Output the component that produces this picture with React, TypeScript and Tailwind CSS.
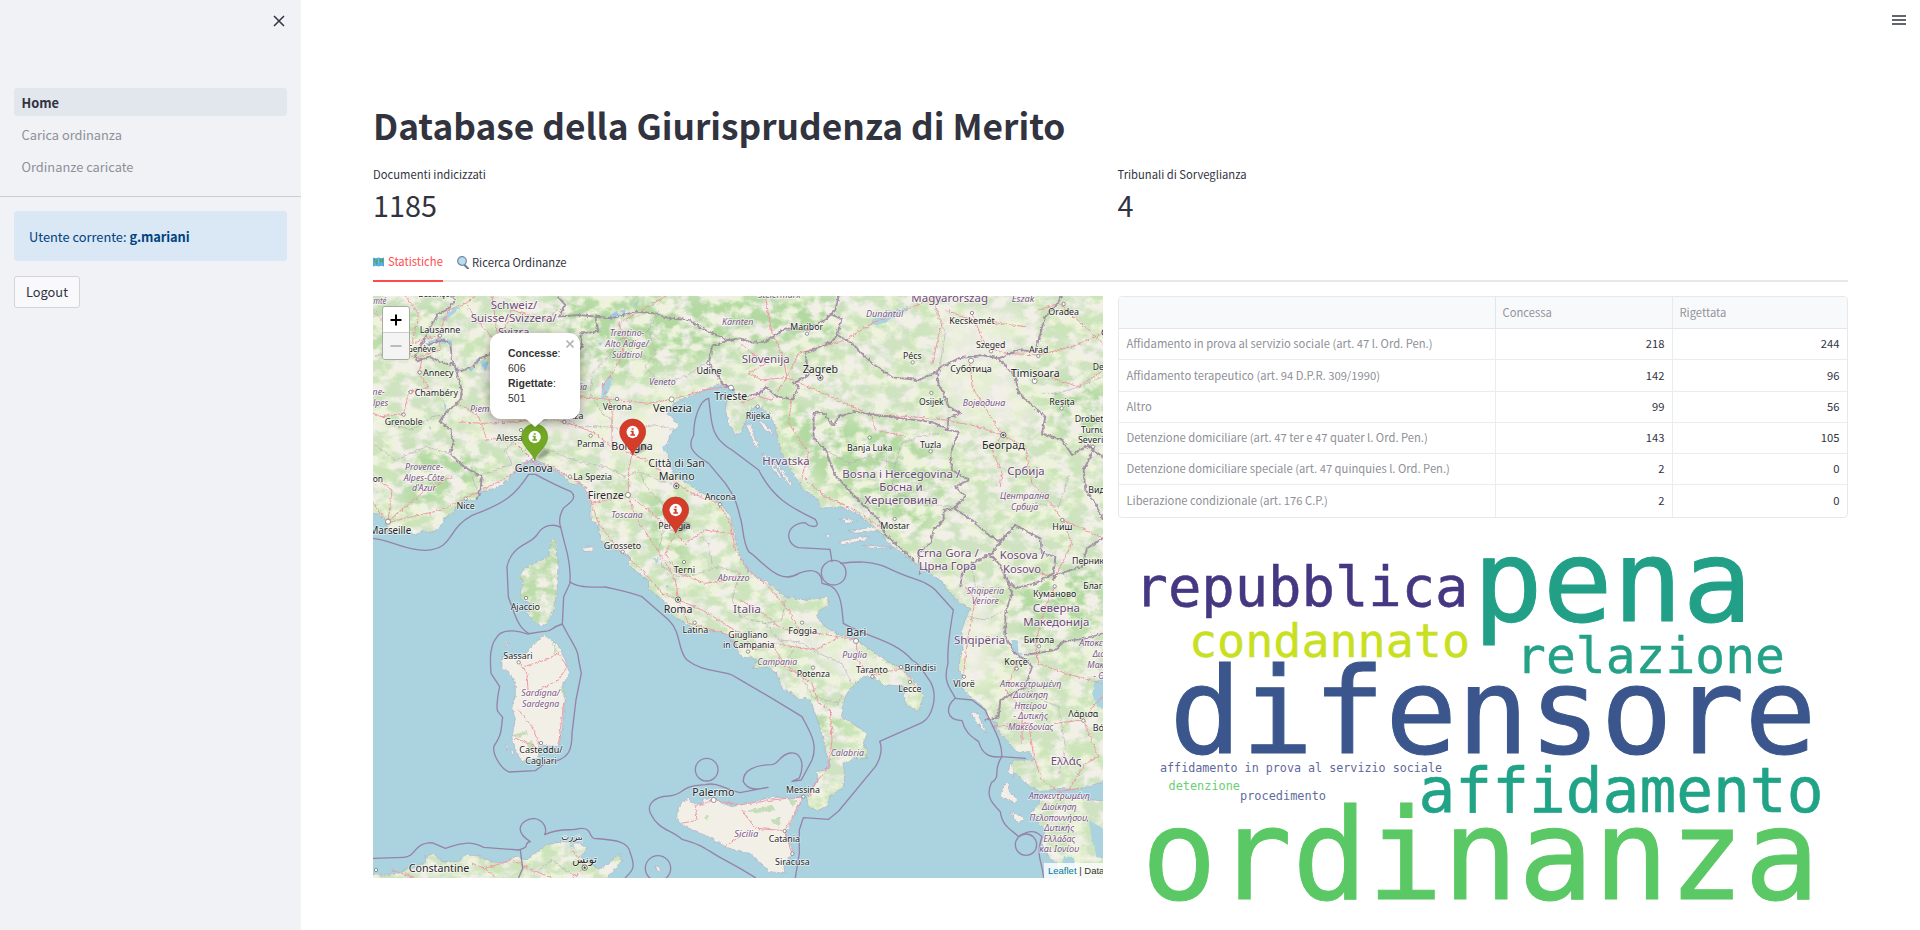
import React from "react";

const FONT = "font-['Noto_Sans_CJK_JP','Noto_Sans_CJK_SC',sans-serif]";

const SEA =
  "-20,668 20,672 35,685 45,705 40,718 70,725 100,722 130,735 150,722 180,728 200,715 215,700 215,685 240,672 255,650 280,630 310,632 318,610 350,602 380,590 410,570 425,545 450,520 480,508 510,518 540,535 575,555 595,585 625,580 640,600 655,640 658,690 680,705 685,750 700,760 730,780 755,785 775,805 770,825 800,850 830,875 830,900 860,920 885,940 905,980 940,1000 970,1018 990,1035 1020,1020 1060,1032 1085,1048 1100,1085 1114,1105 1139,1100 1154,1110 1144,1135 1189,1132 1214,1150 1224,1180 1234,1200 1259,1210 1284,1230 1304,1220 1319,1240 1329,1270 1344,1310 1354,1350 1362,1390 1376,1430 1360,1440 1334,1445 1339,1470 1319,1500 1304,1520 1309,1550 1339,1560 1364,1550 1374,1520 1414,1490 1419,1450 1412,1420 1449,1405 1484,1405 1484,1380 1474,1360 1486,1330 1464,1315 1434,1295 1409,1280 1414,1240 1424,1210 1449,1180 1474,1160 1504,1160 1534,1185 1594,1188 1594,1220 1604,1245 1639,1265 1654,1220 1639,1190 1619,1165 1584,1132 1544,1115 1504,1085 1454,1050 1404,1035 1359,1010 1334,980 1344,960 1372,945 1366,922 1334,925 1294,930 1234,918 1204,890 1184,875 1164,870 1124,840 1104,800 1095,770 1085,720 1075,680 1045,640 1010,620 960,590 935,575 905,550 890,510 885,470 895,430 920,410 900,380 885,370 905,340 950,320 1000,300 1040,282 1078,290 1090,310 1065,330 1060,360 1070,400 1090,435 1104,430 1119,400 1129,370 1144,350 1164,350 1194,375 1209,405 1214,440 1224,480 1249,530 1269,560 1294,600 1339,630 1344,655 1404,650 1454,670 1504,710 1534,735 1544,755 1584,785 1624,815 1674,850 1704,870 1744,920 1764,940 1794,955 1784,980 1769,1020 1774,1070 1764,1110 1759,1140 1774,1160 1759,1180 1784,1210 1834,1250 1844,1280 1874,1300 1874,1320 1904,1350 1934,1385 1974,1385 1984,1410 1924,1410 1914,1440 1944,1460 1974,1490 2004,1505 2064,1495 2114,1500 2210,1470 2210,1535 2120,1525 2060,1512 2010,1520 1994,1550 1974,1570 1994,1590 2019,1620 2009,1660 2029,1700 2054,1720 2060,1790 690,1790 705,1763 730,1735 750,1715 740,1692 710,1720 680,1738 660,1725 625,1700 645,1675 620,1660 570,1655 520,1665 490,1690 460,1710 430,1700 390,1720 360,1715 320,1698 280,1695 260,1715 210,1715 185,1690 160,1700 160,1720 110,1735 80,1750 40,1758 -20,1750";

const ISLANDS = [
  "540,745 550,750 553,790 560,820 555,870 555,900 545,960 525,1000 510,1010 490,995 465,970 485,945 445,925 445,910 455,870 440,865 455,835 500,815 530,800 535,770",
  "515,1035 545,1055 560,1070 580,1110 592,1150 570,1190 580,1220 575,1270 570,1320 560,1370 500,1365 500,1400 450,1415 430,1380 420,1340 430,1290 420,1250 430,1220 430,1180 410,1145 390,1135 390,1100 450,1100 470,1080 490,1060",
  "915,1570 930,1535 950,1525 965,1545 990,1540 995,1525 1025,1525 1050,1540 1080,1550 1104,1545 1164,1530 1214,1520 1254,1528 1294,1520 1274,1560 1254,1600 1239,1640 1259,1670 1264,1690 1234,1720 1239,1750 1194,1745 1164,1720 1134,1690 1104,1685 1060,1670 1010,1640 940,1610 915,1585",
  "630,778 645,772 666,768 664,784 634,784",
  "1794,1270 1819,1268 1829,1300 1844,1330 1824,1312 1808,1286",
  "1884,1520 1894,1488 1908,1478 1912,1508 1936,1526 1930,1538 1904,1528",
  "1914,1565 1950,1580 1958,1590 1934,1596",
  "1915,1420 1926,1440 1922,1460 1908,1446",
  "404,1052 410,1060 402,1072", "400,1365 408,1370 404,1382", "416,1378 426,1385 420,1396",
  "1122,405 1136,400 1150,450 1162,468 1154,476 1138,440", "1160,390 1196,418 1206,436 1178,420",
  "1404,685 1440,688 1456,694 1420,700", "1360,735 1376,732 1370,742", "1400,755 1460,742 1490,740 1480,750 1410,764", "1430,722 1500,712 1520,722 1450,730",
  "1170,490 1180,494 1230,560 1222,562", "1200,510 1206,508 1262,584 1256,590", "1470,765 1560,772 1510,776",
  "850,1728 862,1730 866,1742 856,1742",
];

const MARITIME = [
  "M3 745 C60 750 90 780 160 781 C250 775 220 720 300 676 C400 640 430 615 470 553 L490 553 C540 580 560 590 596 604 C620 625 590 640 574 655 C560 680 562 700 566 712",
  "M566 712 C545 700 515 705 498 730 C480 765 420 760 405 830 L409 920 C430 980 440 1015 470 1030",
  "M566 712 L578 760 C590 800 596 850 594 880 L575 920 L571 1002",
  "M571 1002 C530 1015 545 1025 510 1025 L466 1032 C440 1022 405 1018 385 1030 C350 1060 354 1110 357 1150 L383 1190 C376 1220 372 1260 378 1265 L392 1282 C386 1320 392 1330 366 1368 C360 1395 390 1440 412 1446 L490 1442 C520 1420 520 1412 555 1412 C590 1400 600 1380 600 1330 L612 1230 L628 1150 L620 1110 C620 1080 600 1060 571 1002",
  "M594 875 C610 890 650 893 700 891 C740 900 770 905 810 920 L890 990 C930 1030 915 1080 945 1110 C990 1145 1040 1140 1080 1155 L1114 1175 L1200 1225 L1290 1280 C1310 1320 1340 1360 1320 1410 L1288 1470 L1260 1474 L1282 1464 C1300 1420 1285 1385 1255 1389 C1220 1395 1225 1420 1200 1424 C1150 1424 1112 1440 1114 1475 C1130 1505 1160 1497 1188 1492 L1104 1508 C1060 1500 1040 1475 1000 1484 C910 1490 950 1510 890 1518 C840 1520 822 1548 838 1575 C860 1620 900 1620 930 1648 C990 1665 990 1670 1040 1700 L1104 1735 L1150 1763",
  "M1270 1763 L1282 1690 L1282 1620 L1294 1583 L1370 1588 L1400 1563 L1510 1430 C1530 1400 1530 1370 1523 1354 L1650 1298 C1680 1280 1700 1220 1675 1175 C1650 1140 1640 1120 1620 1110 C1570 1050 1480 1040 1414 1000 C1410 960 1410 900 1370 885 L1350 880 C1350 850 1330 830 1280 850 C1220 890 1170 810 1130 785 C1110 750 1115 710 1104 680 C1090 620 1080 610 1060 580 L1010 520 C960 490 945 470 965 435 C965 380 985 330 1010 325",
  "M1010 325 C1020 390 1010 440 1080 480 L1160 540 C1200 620 1250 650 1330 688 C1350 720 1310 710 1300 698 C1240 700 1235 760 1280 773 L1374 778 L1380 815",
  "M1406 820 C1450 815 1500 810 1550 835 C1620 870 1660 870 1690 900 L1744 960 C1730 1040 1725 1080 1728 1120 C1710 1180 1740 1200 1750 1225 C1720 1250 1720 1290 1770 1292 C1780 1330 1800 1340 1820 1355 C1830 1390 1850 1405 1890 1400 C1860 1440 1890 1460 1858 1478 C1840 1520 1860 1540 1885 1565 C1890 1610 1920 1620 1940 1640 C1970 1620 1990 1620 2010 1640 C1990 1700 2010 1710 2015 1763",
  "M1750 1225 L1800 1230 L1840 1260 C1860 1310 1890 1350 1890 1400 L1960 1405",
  "M3 1705 L95 1702 C135 1700 120 1660 180 1658 L220 1675 C280 1655 300 1655 335 1672 L440 1680 C480 1670 450 1660 475 1655 C420 1620 450 1590 485 1585 C520 1590 525 1620 518 1634 C570 1610 600 1625 620 1616 C660 1610 650 1640 665 1645 C720 1650 770 1650 775 1690 C790 1730 785 1740 760 1763",
  "M445 1680 L452 1735 L440 1763",
];

const CIRCLES = [[1004, 1439, 34], [858, 1735, 38], [1962, 1664, 32], [1385, 848, 37]];

const BORDERS = [
  "240,18 250,30 225,60 200,70 175,110 165,130 130,200 135,215 170,200 230,225 245,215 255,250 270,300 265,330 215,375 205,395 235,420 245,455 235,490 275,530 330,560 325,600 315,625",
  "170,165 205,150 235,158 240,215 260,245 300,232 325,205 360,190 400,225 430,190 470,230 500,215 540,215 590,190 630,170 625,130 680,125 670,80 720,85",
  "555,18 580,45 560,80 620,75 670,80 720,85 790,65 850,70 890,85 950,90 1000,120 1070,150",
  "1070,150 1104,145 1140,158 1180,155 1240,115 1310,120 1365,85 1390,60 1400,18",
  "1070,150 1020,170 1010,220 1035,250 1050,280 1085,300",
  "1104,322 1165,310 1180,290 1215,320 1262,328 1280,290 1265,280 1310,255 1300,190 1380,155 1395,135 1410,85 1380,75",
  "1395,135 1440,160 1500,220 1560,262 1640,270 1690,248 1710,230 1760,205 1830,195 1880,205 1940,180 1990,185 2005,130 2020,80 2050,50 2070,18",
  "1695,248 1700,285 1715,310 1730,350 1765,370 1730,385 1725,420 1690,400 1670,395 1590,385 1510,375 1450,365 1400,380 1385,405 1350,365 1325,370 1325,445 1360,480 1390,555 1440,610 1480,650 1520,690 1540,735 1625,810",
  "1725,420 1760,425 1735,490 1740,540 1790,570 1750,590 1780,620 1745,655 1715,660 1715,690 1685,720 1675,760 1640,790 1645,850",
  "1745,655 1800,690 1850,735 1885,755 1860,790 1800,820 1770,850 1765,890",
  "1885,755 1930,705 1975,730 2005,745 2010,790 2050,800 2045,850 1990,880 1930,895 1905,870 1880,820 1850,790",
  "1880,205 1930,260 1940,310 2020,380 2010,430 2070,450 2100,495 2150,465 2165,480 2135,540 2140,600 2170,640 2193,690",
  "2193,745 2145,775 2130,830 2050,855 2045,870",
  "1905,870 1920,910 1900,970 1900,1040 1930,1090 1960,1110 1980,1130 1960,1190 1885,1230 1880,1280 1840,1290",
  "1960,1095 2050,1080 2075,1055 2140,1045 2193,1030",
  "2150,470 2193,500",
];

const PROVINCES = [
  "315,600 300,560 360,545 420,520 400,480 430,450 510,470 590,505 640,520 700,530 760,560 800,545 860,570 900,580",
  "460,480 500,400 560,370 620,410 700,410 780,420 850,405 910,420", "660,260 655,310 690,370 720,390 720,420",
  "660,250 710,200 740,150 830,120 860,60", "830,120 850,190 820,230 860,280 940,260 1000,220",
  "800,545 830,600 870,640 880,700 860,780 870,830 920,860 980,850 1040,830 1104,850", "880,700 940,690 960,720 1010,760 1020,820",
  "1104,850 1080,920 1104,980 1180,1000 1230,990 1240,930", "1180,1000 1220,1050 1280,1055 1340,1090 1410,1120 1440,1180",
  "1280,1055 1240,1120 1290,1160 1320,1220 1400,1240 1414,1210", "10,200 60,180 70,120 130,130", "50,400 120,420 180,380 215,375",
  "3,460 70,510 160,470 230,490", "1360,480 1430,520 1490,500 1570,520 1590,460 1640,440 1700,430", "1570,520 1560,600 1640,640 1740,650",
  "1700,250 1720,130 1690,60 1700,18", "2010,310 2060,310 2120,290 2193,260", "1900,960 1840,990 1790,980", "1800,820 1810,890 1900,940",
  "1960,1190 2010,1230 2060,1250 2080,1370 2060,1450", "500,1740 540,1710 580,1740 620,1763", "1990,640 2060,650 2090,560",
];

const ROADS = [
  "3,60 60,120 120,200 150,210 140,250 170,290 110,305 95,370 30,380 3,370", "100,18 140,70 120,160 200,135 205,180 140,200",
  "200,135 230,60 280,40 310,18", "280,40 330,110 380,160 360,18", "380,160 420,60 520,90 555,60", "260,340 320,380 345,450 410,440 470,500",
  "260,395 330,400 440,395 520,380 575,395 660,425 720,470 780,492 830,515 900,570 960,610 1040,640 1075,700 1090,780 1130,840 1190,890 1250,960 1280,1020 1400,1040 1450,1050",
  "575,395 620,320 740,330 830,340 900,328 1000,300 1060,290", "720,470 720,350 690,290 740,220 760,150 740,100 830,50 880,18",
  "780,492 770,540 768,615 790,680 830,740 870,800 910,870 920,930 990,960 1104,1030 1150,1080 1200,1060 1240,1130 1320,1180 1340,1240 1375,1260 1380,1350 1370,1430 1330,1480 1310,1520",
  "470,515 540,530 590,560 640,590 660,640 768,615", "640,590 680,700 740,780 810,840 870,910 920,930 950,1000 1060,1030 1104,1080",
  "768,615 830,660 910,730 940,760 1000,720 1080,730", "910,730 880,790 920,850 1000,880 1070,870 1104,850", "40,700 120,680 210,660 280,626 330,600 410,560 480,508",
  "3,560 60,600 48,695 3,640", "48,695 160,600 240,560", "1454,1050 1454,1110 1500,1155 1594,1135 1630,1190", "1404,1040 1330,1080 1200,1060", "1104,930 1160,960 1220,1010 1290,1035",
  "1104,160 1180,220 1130,250 1170,270 1245,262 1280,190 1350,170 1420,150 1500,100 1600,60 1700,18", "1180,18 1200,130 1230,190 1245,262", "1104,340 1160,320 1200,330 1245,262 1330,300 1420,340 1500,375 1620,380 1720,390 1820,410 1890,435",
  "1260,320 1250,400 1310,490 1290,560 1360,620 1450,660 1530,715", "1800,70 1840,170 1900,190 1999,195 2100,170 2193,130", "1680,18 1710,100 1680,220", "1795,210 1800,290 1850,370 1890,435 1960,470 1980,580 2020,620 2071,690 2140,720 2193,745",
  "2071,690 2100,760 2050,860 1970,840", "1990,250 2060,270 2120,290 2193,240", "1890,435 1860,480 1890,550 1885,590", "1500,380 1510,420 1560,430 1600,440",
  "2048,890 2020,950 1990,1060 2000,1120 2080,1150 2190,1180", "1774,1160 1780,1100 1790,1030 1810,930 1780,890", "2050,1300 2130,1290 2190,1220", "2134,1290 2180,1400 2140,1420 2090,1500", "1860,1310 1970,1300 1985,1400 2010,1470 2060,1505 2120,1495",
  "440,1115 465,1150 468,1200", "455,1130 520,1110 560,1090 585,1130 560,1170 500,1200", "440,1260 480,1310 500,1360", "490,1370 430,1345", "575,1240 560,1360",
  "1025,1530 970,1550 975,1590 930,1600", "1025,1530 1100,1545 1200,1530 1294,1520 1250,1600 1238,1622 1260,1690", "1238,1622 1150,1615 1110,1560", "1060,1670 1130,1620",
  "300,1720 340,1735 420,1710 480,1740 540,1763", "600,1680 640,1733 600,1763", "60,1740 130,1763", "340,1735 370,1763",
  "2000,60 2060,40 2150,120 2193,160", "1720,60 1800,90 1880,100 1960,110", "1940,1110 1900,1200 1950,1260 1950,1360",
];

type Label = [string, number, number, number, number, string?];
/* [text, center x, baseline y, font size, width, kind] */
const LABELS: Label[] = [
  ["Lausanne", 204, 127, 28, 122], ["Genève", 148, 184, 28, 88], ["Annecy", 199, 258, 28, 92], ["Chambéry", 193, 317, 28, 130], ["Grenoble", 95, 405, 28, 114],
  ["Alessandria", 445, 451, 28, 144], ["Genova", 485, 544, 31, 114], ["La Spezia", 662, 569, 28, 117], ["Firenze", 701, 626, 31, 108], ["Parma", 656, 469, 28, 82],
  ["Bologna", 780, 479, 31, 124], ["Verona", 736, 359, 28, 88], ["Venezia", 901, 364, 31, 116], ["Udine", 1011, 250, 28, 75], ["Trieste", 1076, 328, 31, 98],
  ["Piacenza", 580, 386, 28, 108], ["Città di San", 914, 529, 31, 170], ["Marino", 914, 570, 31, 108], ["Ancona", 1045, 630, 28, 94], ["Perugia", 907, 715, 28, 96],
  ["Nice", 281, 656, 28, 55], ["Marseille", 55, 730, 31, 125], ["Avignon", -16, 575, 28, 98], ["Grosseto", 751, 775, 28, 112], ["Terni", 937, 847, 28, 64],
  ["Besançon", 194, 21, 28, 110],
  ["Ajaccio", 460, 959, 28, 88], ["Roma", 918, 967, 31, 86], ["Latina", 970, 1027, 28, 77], ["Giugliano", 1128, 1042, 28, 118], ["in Campania", 1130, 1074, 28, 154],
  ["Sassari", 438, 1107, 28, 88], ["Casteddu/", 507, 1389, 28, 130], ["Cagliari", 507, 1421, 28, 94], ["Palermo", 1024, 1517, 31, 126], ["Constantine", 201, 1744, 31, 182],
  ["بنزرت", 600, 1650, 28, 64], ["تونس", 638, 1718, 32, 74],
  ["Foggia", 1292, 1030, 28, 86], ["Bari", 1453, 1038, 31, 60], ["Taranto", 1500, 1148, 28, 96], ["Brindisi", 1645, 1141, 28, 95], ["Lecce", 1614, 1206, 28, 70],
  ["Potenza", 1324, 1161, 28, 100], ["Messina", 1293, 1507, 28, 102], ["Catania", 1237, 1656, 28, 94], ["Siracusa", 1261, 1724, 28, 104],
  ["Maribor", 1304, 120, 28, 98], ["Zagreb", 1345, 247, 31, 106], ["Rijeka", 1158, 386, 28, 74], ["Pécs", 1621, 206, 28, 56], ["Osijek", 1678, 345, 28, 74],
  ["Kecskemét", 1800, 100, 28, 136], ["Szeged", 1856, 174, 28, 88], ["Суботица", 1797, 244, 28, 124], ["Oradea", 2075, 73, 28, 92], ["Arad", 2000, 188, 28, 58],
  ["Timișoara", 1990, 259, 31, 146], ["Reșița", 2070, 345, 28, 76], ["Deva", 2192, 239, 28, 60], ["Cluj", 2212, 136, 28, 50], ["Drobeta-", 2163, 394, 28, 110], ["Turnu", 2163, 427, 28, 72], ["Severin", 2164, 458, 28, 92],
  ["Banja Luka", 1493, 481, 28, 136], ["Tuzla", 1676, 474, 28, 64], ["Београд", 1894, 477, 31, 128], ["Mostar", 1569, 717, 28, 88], ["Ниш", 2071, 720, 28, 60], ["Видин", 2190, 609, 28, 82], ["Перник", 2148, 820, 28, 96],
  ["Благоевград", 2214, 897, 28, 160], ["Куманово", 2048, 920, 28, 130], ["Битола", 2001, 1057, 28, 92], ["Korçë", 1932, 1125, 28, 70], ["Vlorë", 1776, 1190, 28, 64], ["Λάρισα", 2134, 1281, 28, 90], ["Βόλος", 2200, 1323, 28, 76],
  ["Schweiz/", 426, 55, 31, 140, "c"], ["Suisse/Svizzera/", 425, 96, 31, 258, "c"], ["Svizra", 425, 137, 31, 94, "c"], ["Slovenija", 1181, 218, 31, 144, "c"], ["Magyarország", 1733, 34, 31, 230, "c"],
  ["Hrvatska", 1242, 524, 31, 142, "c"], ["Bosna i Hercegovina /", 1588, 562, 31, 354, "c"], ["Босна и", 1587, 602, 31, 130, "c"], ["Херцеговина", 1587, 642, 31, 220, "c"], ["Србија", 1962, 555, 31, 112, "c"],
  ["Crna Gora /", 1727, 800, 31, 186, "c"], ["Црна Гора", 1727, 839, 31, 172, "c"], ["Kosova /", 1951, 807, 31, 136, "c"], ["Kosovo", 1950, 847, 31, 114, "c"], ["Северна", 2053, 965, 31, 142, "c"], ["Македонија", 2053, 1006, 31, 198, "c"],
  ["Shqipëria", 1823, 1061, 31, 154, "c"], ["Italia", 1125, 969, 31, 84, "c"], ["Ελλάς", 2082, 1424, 31, 92, "c"],
  ["Trentino-", 765, 138, 27, 104, "r"], ["Alto Adige/", 765, 170, 27, 130, "r"], ["Südtirol", 765, 202, 27, 92, "r"], ["Veneto", 871, 284, 27, 80, "r"], ["Kärnten", 1097, 105, 27, 94, "r"], ["Piemonte", 350, 366, 27, 112, "r"], ["Lombardia", 585, 298, 27, 120, "r"],
  ["Provence-", 156, 539, 27, 114, "r"], ["Alpes-Côte", 156, 571, 27, 122, "r"], ["d'Azur", 156, 603, 27, 72, "r"], ["Auvergne-", -20, 315, 27, 116, "r"], ["Rhône-Alpes", -22, 348, 27, 142, "r"], ["Comté", 10, 42, 27, 66, "r"], ["Toscana", 765, 683, 27, 94, "r"], ["Abruzzo", 1085, 872, 27, 96, "r"],
  ["Steiermark", 1222, 24, 27, 128, "r"], ["Dunántúl", 1538, 81, 27, 112, "r"], ["Észak", 1953, 34, 27, 68, "r"], ["Војводина", 1836, 346, 27, 128, "r"], ["Централна", 1958, 627, 27, 148, "r"], ["Србија", 1958, 659, 27, 82, "r"],
  ["Sardigna/", 506, 1217, 27, 116, "r"], ["Sardegna", 506, 1249, 27, 112, "r"], ["Sicilia", 1123, 1639, 27, 72, "r"], ["Campania", 1216, 1123, 27, 120, "r"], ["Puglia", 1448, 1103, 27, 74, "r"], ["Calabria", 1426, 1397, 27, 100, "r"],
  ["Shqipëria", 1840, 910, 27, 112, "r"], ["Veriore", 1840, 942, 27, 82, "r"], ["Αποκεντρωμένη", 1976, 1191, 27, 184, "r"], ["Διοίκηση", 1976, 1223, 27, 104, "r"], ["Ηπείρου", 1976, 1255, 27, 98, "r"], ["- Δυτικής", 1976, 1287, 27, 104, "r"], ["Μακεδονίας", 1976, 1318, 27, 136, "r"],
  ["Αποκεντρωμένη", 2062, 1527, 27, 184, "r"], ["Διοίκηση", 2062, 1559, 27, 104, "r"], ["Πελοποννήσου,", 2062, 1591, 27, 180, "r"], ["Δυτικής", 2062, 1623, 27, 90, "r"], ["Ελλάδας", 2062, 1655, 27, 96, "r"], ["και Ιονίου", 2062, 1686, 27, 120, "r"],
  ["Αποκεντρωμένη", 2214, 1068, 27, 184, "r"], ["Διοίκηση", 2214, 1101, 27, 104, "r"], ["Μακεδονίας", 2214, 1133, 27, 136, "r"], ["- Θράκης", 2214, 1165, 27, 100, "r"],
];

const DOTS = [
  [204, 137], [143, 247], [116, 306], [95, 374], [447, 420], [484, 509], [594, 560], [656, 437], [735, 327], [1009, 219], [577, 396], [1044, 643], [281, 626], [752, 785], [936, 816], [462, 924], [968, 998], [440, 1117], [507, 1359],
  [1290, 998], [1587, 1131], [1614, 1176], [1323, 1133], [1501, 1160], [1294, 1520], [1238, 1623], [1261, 1691], [1305, 131], [1157, 350], [1622, 217], [1678, 309], [1800, 69], [1857, 184], [2075, 42], [1999, 198], [2069, 355], [1493, 443], [1676, 484],
  [1568, 687], [2071, 690], [2048, 889], [2001, 1069], [1934, 1136], [1776, 1160], [2134, 1292], [2163, 470], [12, 1740], [1128, 1085],
];
const CITY_DOTS = [[899, 328], [1077, 293], [768, 615], [48, 695], [1797, 212], [1988, 273], [1452, 1053], [1025, 1530]];
const CAPITALS = [[918, 929], [1345, 263], [1894, 435], [638, 1733], [913, 588]];

const FILL: Record<string, string> = { t: "#262626", c: "#6f4a7a", r: "#7b5687" };

function MapLabel({ item }: { item: Label }) {
  const [text, x, y, size, width, kind = "t"] = item;
  return (
    <text x={x} y={y + 1} fontSize={size} textLength={width} lengthAdjust="spacingAndGlyphs" fill={FILL[kind]} fontStyle={kind === "r" ? "italic" : "normal"}
      textAnchor="middle" stroke="#ffffff" strokeOpacity=".65" strokeWidth="5" strokeLinejoin="round" paintOrder="stroke">{text}</text>
  );
}

function Pin({ x, y, color, edge }: { x: number; y: number; color: string; edge: string }) {
  return (
    <g transform={`translate(${x} ${y})`}>
      <path d="M2 -3 L26 -32 Q48 -34 44 -20 Q30 -8 2 0Z" fill="#000" opacity=".28" filter="url(#soft)" />
      <path d="M0 0 C-6 -22 -39 -40 -39 -70 A39 38 0 0 1 39 -70 C39 -40 6 -22 0 0Z" fill={color} stroke={edge} strokeWidth="2" />
      <circle cx="0" cy="-69" r="18.5" fill="#fff" />
      <path d="M-6 -73 H3 V-62 H7 V-58 H-7 V-62 H-3 V-69 H-6Z M-3 -80 H3 V-76 H-3Z" fill={color} />
    </g>
  );
}

function ItalyMap() {
  return (
    <svg className="block h-full w-full" viewBox="3 18 2190 1746" preserveAspectRatio="none" fontFamily="'Noto Sans','DejaVu Sans',sans-serif">
      <defs>
        <filter id="rough" x="-5%" y="-5%" width="110%" height="110%">
          <feTurbulence type="fractalNoise" baseFrequency=".1" numOctaves="2" seed="4" />
          <feDisplacementMap in="SourceGraphic" scale="12" xChannelSelector="R" yChannelSelector="G" />
        </filter>
        <filter id="forest" x="0" y="0" width="100%" height="100%" colorInterpolationFilters="sRGB">
          <feTurbulence type="fractalNoise" baseFrequency=".022 .028" numOctaves="6" seed="11" />
          <feColorMatrix values="0 0 0 0 .67  0 0 0 0 .84  0 0 0 0 .60  4 0 0 0 -1.5" />
        </filter>
        <filter id="fields" x="0" y="0" width="100%" height="100%" colorInterpolationFilters="sRGB">
          <feTurbulence type="fractalNoise" baseFrequency=".014" numOctaves="5" seed="27" />
          <feColorMatrix values="0 0 0 0 .925  0 0 0 0 .96  0 0 0 0 .83  0 4 0 0 -1.6" />
        </filter>
        <filter id="soft"><feGaussianBlur stdDeviation="3" /></filter>
        <filter id="blur"><feGaussianBlur stdDeviation="22" /></filter>
        <mask id="woods">
          <rect width="2200" height="1780" fill="#808080" />
          <g filter="url(#blur)">
            <path d="M300 380 L420 370 L560 400 L860 350 L1040 270 L890 500 L700 470 L560 420 L440 440 L300 430Z" fill="#000" />
            <path d="M1700 60 L1960 60 L1900 200 L2000 400 L1800 420 L1700 300Z" fill="#222" />
            <path d="M1220 980 L1460 1060 L1640 1240 L1400 1160Z M1760 930 L1850 900 L1860 1200 L1760 1180Z M400 1040 L600 1040 L570 1400 L400 1400Z M900 1500 L1300 1520 L1240 1760Z M740 440 L900 500 L860 560 L700 480Z" fill="#1a1a1a" />
            <path d="M540 18 L1400 18 L1380 150 L1060 180 L760 260 L560 180Z M1160 310 L1340 380 L1600 420 L1740 560 L1640 740 L1500 650 L1340 560Z M2050 280 L2193 280 L2193 440 L2060 430Z M1920 860 L2193 830 L2193 1020 L1960 1040Z M440 820 L560 800 L530 1000 L450 960Z M100 480 L330 480 L300 600 L100 660Z M3 60 L240 60 L140 130 L3 200Z M820 620 L870 600 L960 840 L840 760Z M1320 1250 L1400 1260 L1400 1360 L1350 1350Z" fill="#e4e4e4" />
          </g>
        </mask>
        <clipPath id="corsica"><polygon points={ISLANDS[0]} /></clipPath>
      </defs>
      <rect width="2200" height="1780" fill="#f2efe9" />
      <rect width="2200" height="1780" filter="url(#fields)" opacity=".7" />
      <g mask="url(#woods)"><rect width="2200" height="1780" filter="url(#forest)" /></g>
      <g filter="url(#rough)">
        <polygon points={SEA} fill="#aad3df" stroke="#a99fc0" strokeWidth="1.5" />
        <polygon points="2200,1160 2168,1175 2160,1210 2175,1250 2200,1260" fill="#aad3df" />
        <polygon points="2150,1590 2200,1620 2200,1710 2175,1700 2160,1650" fill="#aad3df" />
        <polygon points="2075,1700 2110,1700 2105,1730 2075,1725" fill="#aad3df" />
        {ISLANDS.map((p, i) => <polygon key={i} points={p} fill="#f2efe6" stroke="#a99fc0" strokeWidth="1.5" />)}
      </g>
      <g clipPath="url(#corsica)"><rect width="2200" height="1780" filter="url(#forest)" opacity=".75" /></g>
      <g fill="#b5d6a6" opacity=".7" filter="url(#rough)">
        <path d="M425 1335 L465 1320 L468 1336 L430 1342Z M462 1360 L480 1350 L488 1370 L470 1380Z M565 1190 L578 1200 L576 1230Z M538 1050 L560 1085 L548 1090Z" />
        <path d="M1125 1562 L1200 1545 L1210 1560 L1150 1570Z M1195 1590 L1225 1580 L1220 1610Z M995 1583 L1010 1575 L1008 1592Z M1250 1530 L1280 1530 L1262 1550Z" />
      </g>
      <g fill="#aad3df" filter="url(#rough)">
        <path d="M160 160 Q200 135 238 152 L240 165 Q200 155 160 165Z M205 90 L250 50 L262 54 L215 96Z M690 285 L722 255 L715 290 L698 330 L688 325Z M1500 90 L1580 58 L1610 50 L1598 66 L1540 98 L1502 104Z M325 215 L340 205 L330 240Z M1918 1050 L1935 1050 L1940 1085 L1960 1095 L1925 1090Z M885 463 L870 470 L875 485 L888 482Z M845 805 L860 805 L855 820Z M590 1663 L606 1660 L604 1678Z M880 885 L892 885 L888 895Z" />
      </g>
      <g fill="#8fc0f5" opacity=".8">
        <path d="M310 210 l10 -6 l-3 20Z M330 225 l15 -12 l5 6 l-10 25Z M290 235 l18 -4 l-12 14Z M250 235 l14 3 l-10 8Z M368 205 l6 10 l-10 2Z M715 75 l20 -12 l4 14 l-22 8Z M745 62 l16 -4 l-3 14Z M785 42 l12 -5 l-4 10Z M680 160 l12 -3 l-8 12Z M215 335 l8 12 l-4 14Z M155 375 l10 12 l6 14Z M840 40 l8 2 l-4 6Z M170 405 l8 10 l-4 4Z" />
      </g>
      <g fill="none" strokeLinejoin="round" strokeLinecap="round">
        <g filter="url(#rough)">
          <g stroke="#b3a3b3" strokeWidth="2" opacity=".85">{PROVINCES.map((p, i) => <polyline key={i} points={p} />)}</g>
          <g stroke="#ee98a6" strokeWidth="3">{ROADS.map((p, i) => <polyline key={i} points={p} />)}</g>
          <g stroke="#a088a2" strokeWidth="5.500" opacity=".9">{BORDERS.map((p, i) => <polyline key={i} points={p} />)}</g>
        </g>
        <g stroke="#9683a8" strokeWidth="4">
          {MARITIME.map((d, i) => <path key={i} d={d} />)}
          {CIRCLES.map(([x, y, r], i) => <circle key={i} cx={x} cy={y} r={r} />)}
        </g>
      </g>
      <g fill="#fff" stroke="#666" strokeWidth="2">
        {DOTS.map(([x, y], i) => <circle key={i} cx={x} cy={y} r="5" />)}
        {CITY_DOTS.map(([x, y], i) => <circle key={i} cx={x} cy={y} r="7.5" />)}
        {CAPITALS.map(([x, y], i) => <g key={i}><circle cx={x} cy={y} r="8" stroke="#333" /><circle cx={x} cy={y} r="3" fill="#333" /></g>)}
      </g>
      {LABELS.map((item, i) => <MapLabel key={i} item={item} />)}
      <Pin x={488} y={510} color="#72a824" edge="#659622" />
      <Pin x={782} y={495} color="#d33d2a" edge="#b93627" />
      <Pin x={911} y={729} color="#d33d2a" edge="#b93627" />
    </svg>
  );
}

const ROWS: [string, number, number][] = [
  ["Affidamento in prova al servizio sociale (art. 47 l. Ord. Pen.)", 218, 244],
  ["Affidamento terapeutico (art. 94 D.P.R. 309/1990)", 142, 96],
  ["Altro", 99, 56],
  ["Detenzione domiciliare (art. 47 ter e 47 quater l. Ord. Pen.)", 143, 105],
  ["Detenzione domiciliare speciale (art. 47 quinquies l. Ord. Pen.)", 2, 0],
  ["Liberazione condizionale (art. 176 C.P.)", 2, 0],
];

/* [word, x, baseline, font size, width, colour, outline] in a 730x384 box */
const WORDS: [string, number, number, number, number, string, number][] = [
  ["repubblica", 16.5, 74.3, 55.5, 334, "#453781", 0.5],
  ["pena", 355, 88.7, 114, 279.5, "#21a087", 1],
  ["condannato", 71, 125, 47, 281, "#c8e020", 0.4],
  ["relazione", 398, 141.3, 49.6, 269, "#24a186", 0.4],
  ["difensore", 51.5, 220.7, 119, 647, "#3a568c", 1],
  ["affidamento in prova al servizio sociale", 42, 239.7, 12, 282, "#5f689c", 0],
  ["detenzione", 50.5, 257.7, 12, 71.5, "#6bce74", 0],
  ["procedimento", 122, 268, 12, 86, "#626c9d", 0],
  ["affidamento", 300.5, 280, 61.5, 405, "#20a386", 0.6],
  ["ordinanza", 23.5, 367, 126, 678, "#5ac864", 1],
];

export default function App() {
  return (
    <div className={`flex h-[930px] w-full overflow-hidden bg-white text-[12.83px] text-[#31333f] ${FONT}`}>
      <aside className="flex w-[301px] shrink-0 flex-col bg-[#f0f2f6]">
        <div className="flex h-[88px] justify-end pt-[15px] pr-[16px]">
          <svg className="h-3 w-3" viewBox="0 0 12 12" stroke="#31333f" strokeWidth="1.5"><path d="M1 1l10 10M11 1L1 11" /></svg>
        </div>
        <nav className="flex flex-col gap-1 px-[14px] text-[#8d9097]">
          <a className="flex h-7 items-center rounded-[3px] bg-[#e2e6ed] px-[7.5px] pt-px font-bold text-[#31333f]">Home</a>
          <a className="mt-px flex h-7 items-center px-[7.5px]">Carica ordinanza</a>
          <a className="flex h-7 items-center px-[7.5px]">Ordinanze caricate</a>
        </nav>
        <div className="mt-[15px] h-px shrink-0 bg-[#cbcdd2]" />
        <div className="flex flex-col items-start px-[14px] pt-[14px]">
          <div className="flex h-[50px] w-full items-center rounded-[3px] bg-[#dae7f4] px-[15px] pt-[2px] whitespace-pre text-[#004280]">Utente corrente: <b className="tracking-[-0.1px]">g.mariani</b></div>
          <button className="mt-[15px] h-8 w-[66px] rounded-[3px] border border-[#d2d4d9] bg-[#f9f9fb]">Logout</button>
        </div>
      </aside>
      <main className="relative flex min-w-0 flex-1 flex-col pr-[72px] pl-[72px]">
        <svg className="absolute top-[14px] right-[14px] h-3 w-[14px]" viewBox="0 0 14 12" stroke="#31333f" strokeWidth="1.4"><path d="M0 2h14M0 6h14M0 10h14" /></svg>
        <h1 className="mt-[101px] h-[48px] text-[35.28px] leading-[48px] font-bold whitespace-nowrap">Database della Giurisprudenza di Merito</h1>
        <div className="mt-[15px] grid grid-cols-2 gap-[14px]">
          {[["Documenti indicizzati", "1185"], ["Tribunali di Sorveglianza", "4"]].map(([k, v]) => (
            <div key={k} className="flex flex-col">
              <span className="h-5 text-[11.23px] leading-5">{k}</span>
              <span className="h-[42px] text-[28.8px] leading-[42px]">{v}</span>
            </div>
          ))}
        </div>
        <div className="mt-[21px] flex h-[35px] gap-[14px] border-b-2 border-[#e8e8ea] text-[11.23px]">
          <div className="flex h-[35px] w-[70px] items-center gap-[4px] border-b-2 border-[#ff4b4b] pb-[4px] whitespace-nowrap text-[#ff4b4b]">
            <svg className="h-[10px] w-[11px] shrink-0" viewBox="0 0 12 11" preserveAspectRatio="none"><path d="M0 .5l3 1 3-1 3 1 3-1v10l-3-1-3 1-3-1-3 1z" fill="#4cabdf" /><path d="M1 2l2 .5 2 1-1 2 1 2-1 1-2-3zM7 2l2 .5 2-.5v3L9.500 7 8 5z" fill="#5f9b3e" /><path d="M3 2v7M6 1v9M9 2v7" stroke="#fff" strokeOpacity=".4" strokeWidth=".5" /></svg>
            <span>Statistiche</span>
          </div>
          <div className="flex h-[33px] items-center gap-[3px] pb-[3px]">
            <svg className="h-[13px] w-[12px]" viewBox="0 0 12 13"><path d="M7 8.500l4 4" stroke="#64798a" strokeWidth="2" strokeLinecap="round" /><circle cx="5" cy="5" r="4.300" fill="#b9ddf3" stroke="#74899b" strokeWidth="1.200" /></svg>
            <span>Ricerca Ordinanze</span>
          </div>
        </div>
        <div className="mt-[14px] grid grid-cols-[730px_730px] gap-[15px]">
          <section className="relative h-[582px] overflow-hidden bg-[#aad3df] font-['Liberation_Sans',Arial,sans-serif]">
            <ItalyMap />
            <div className="absolute top-[10px] left-[9px] w-[28px] overflow-hidden rounded-[3px] border border-[#a9aaa4] bg-white">
              <div className="flex h-[26px] items-center justify-center border-b border-[#ccc]"><svg className="h-3 w-3" viewBox="0 0 12 12" stroke="#000" strokeWidth="2"><path d="M6 .5v11M.5 6h11" /></svg></div>
              <div className="flex h-[26px] items-center justify-center bg-[#f4f4f4]"><svg className="h-3 w-3" viewBox="0 0 12 12" stroke="#bbb" strokeWidth="1.8"><path d="M.5 6h11" /></svg></div>
            </div>
            <div className="absolute top-[37px] left-[117px] h-[86px] w-[90px] rounded-[11px] bg-white pt-[13px] pl-[18px] text-[10.5px] leading-[15px] text-[#333] shadow-[0_3px_12px_rgba(0,0,0,.4)]">
              <b>Concesse</b>:<br />606<br /><b>Rigettate</b>:<br />501
              <svg className="absolute top-[7px] right-[6px] h-2 w-2" viewBox="0 0 8 8" stroke="#b5b5b5" strokeWidth="1.6"><path d="M.5.5l7 7M7.500.5l-7 7" /></svg>
              <svg className="absolute top-[85px] left-[35px] h-[10px] w-5" viewBox="0 0 20 10" fill="#fff"><path d="M0 0h20L10 9z" /></svg>
            </div>
            <div className="absolute right-0 bottom-0 h-[15px] w-[59px] overflow-hidden bg-white/80 pl-1 text-[9.5px] leading-[15px] whitespace-nowrap text-[#333]"><span className="text-[#0078a8]">Leaflet</span> | Data by</div>
          </section>
          <section className="flex flex-col">
            <div className="h-[222px] overflow-hidden rounded-[4px] border border-[#e7e8eb] text-[11.23px]">
              <div className="grid h-[32px] grid-cols-[377px_177px_1fr] border-b border-[#e4e5e9] bg-[#f8f9fb] text-[#92949b]">
                <div className="border-r border-[#e4e5e9]" />
                <div className="flex items-center border-r border-[#e9eaed] px-[6.5px]">Concessa</div>
                <div className="flex items-center px-[6.5px]">Rigettata</div>
              </div>
              {ROWS.map(([name, a, b]) => (
                <div key={name} className="grid h-[31.3px] grid-cols-[377px_177px_1fr] border-b border-[#ebecee] last:border-b-0">
                  <div className="flex items-center border-r border-[#ebecee] pb-px pl-[7.5px] whitespace-nowrap text-[#8e9097]">{name}</div>
                  <div className="flex items-center justify-end border-r border-[#ebecee] pr-[7.5px] pb-px">{a}</div>
                  <div className="flex items-center justify-end pr-[7.5px] pb-px">{b}</div>
                </div>
              ))}
            </div>
            <svg className="mt-[14px] h-[384px] w-full" viewBox="0 0 730 384" fontFamily="'DejaVu Sans Mono',monospace">
              {WORDS.map(([w, x, y, s, len, c, o]) => <text key={w} x={x} y={y} fontSize={s} textLength={len} lengthAdjust="spacingAndGlyphs" fill={c} stroke={c} strokeWidth={o}>{w}</text>)}
            </svg>
          </section>
        </div>
      </main>
    </div>
  );
}
